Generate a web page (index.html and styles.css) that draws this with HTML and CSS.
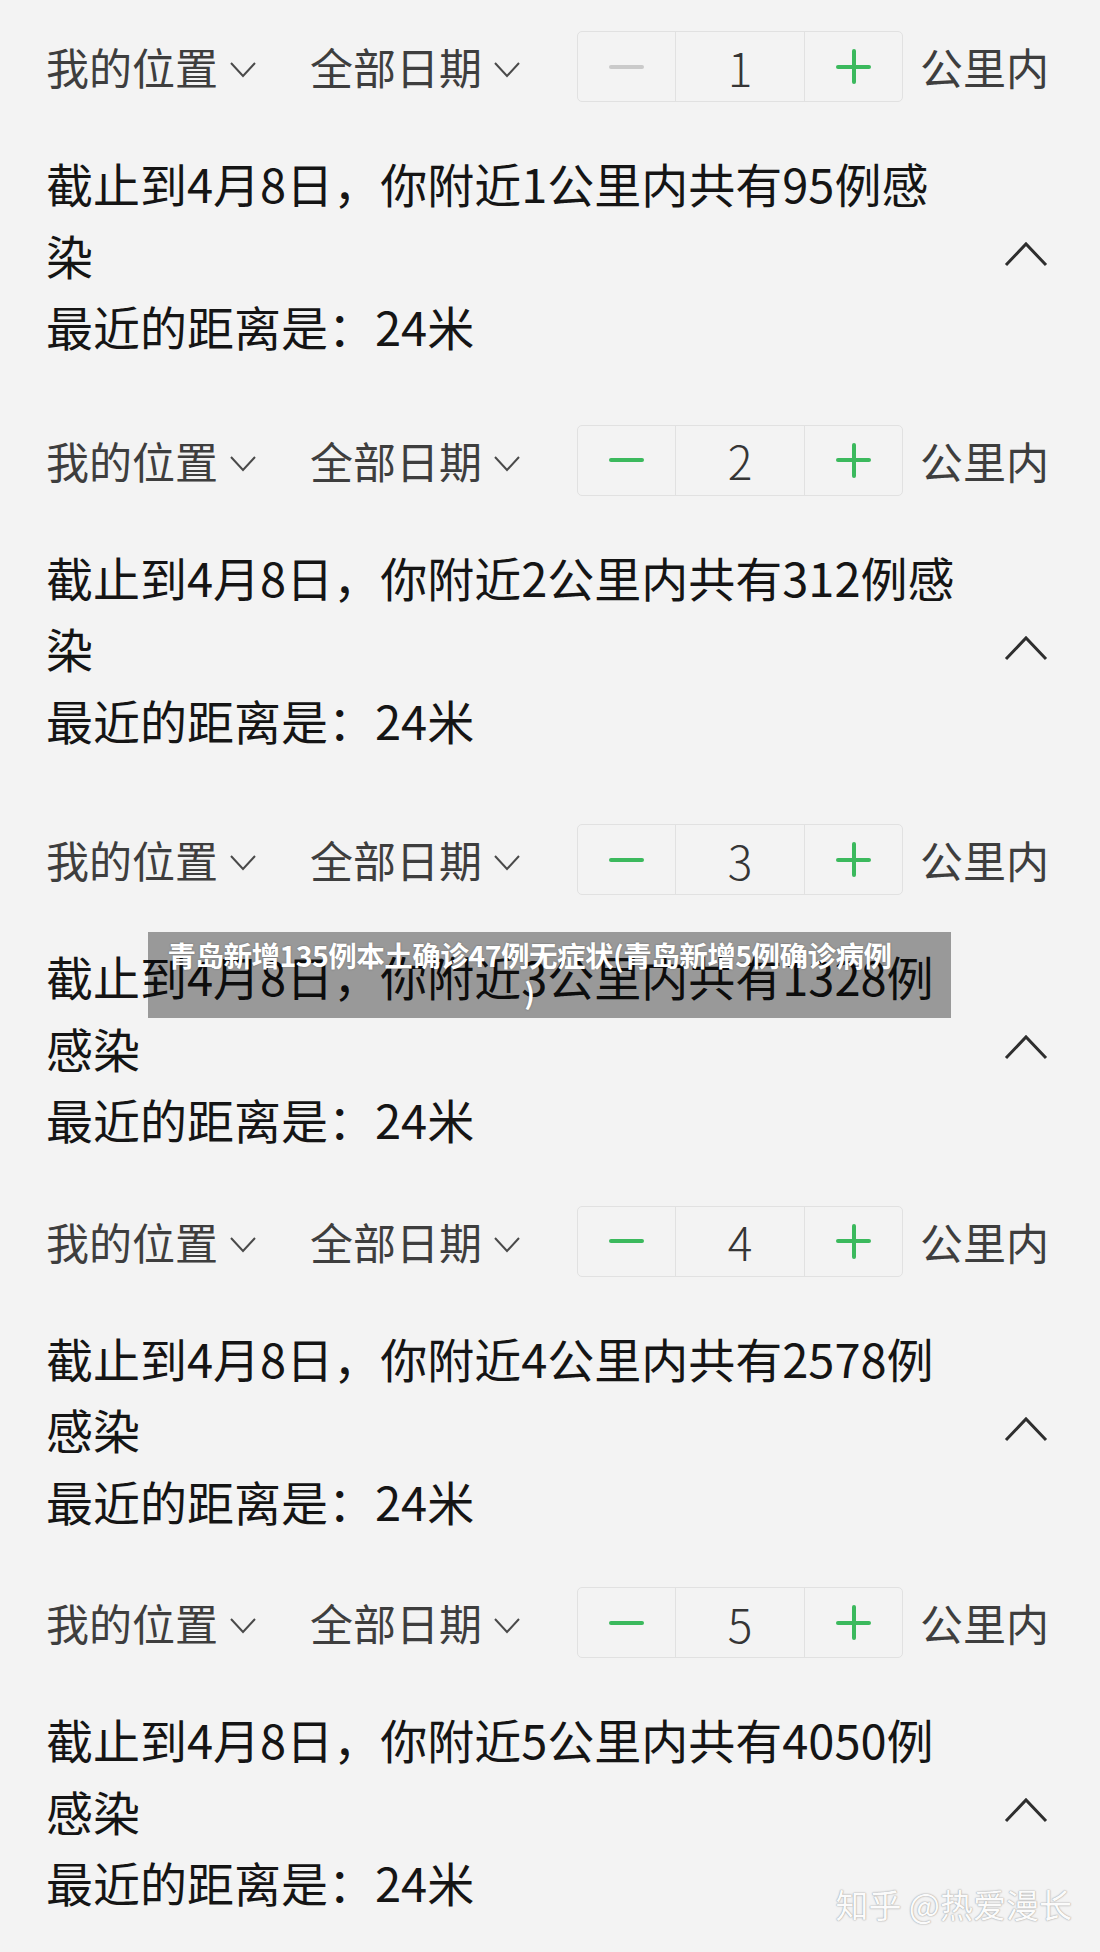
FILE: index.html
```html
<!DOCTYPE html>
<html lang="zh-CN">
<head>
<meta charset="utf-8">
<title>附近感染查询</title>
<link rel="stylesheet" href="styles.css">
</head>
<body>
<div class="page">

  <section class="block block-a">
    <div class="filters">
      <span class="select">我的位置<svg class="caret" viewBox="0 0 28 17"><polyline points="2,2 14,15 26,2"/></svg></span>
      <span class="select">全部日期<svg class="caret" viewBox="0 0 28 17"><polyline points="2,2 14,15 26,2"/></svg></span>
      <div class="stepper">
        <span class="step minus off"><i class="bar-h"></i></span>
        <span class="step value">1</span>
        <span class="step plus"><i class="bar-h"></i><i class="bar-v"></i></span>
      </div>
      <span class="unit">公里内</span>
    </div>
    <div class="result">
      <p class="summary">截止到4月8日，你附近1公里内共有95例感<br>染</p>
      <span class="toggle"><svg viewBox="0 0 46 28"><polyline points="3,25 23,4 43,25"/></svg></span>
    </div>
    <p class="distance">最近的距离是：24米</p>
  </section>

  <section class="block block-b">
    <div class="filters">
      <span class="select">我的位置<svg class="caret" viewBox="0 0 28 17"><polyline points="2,2 14,15 26,2"/></svg></span>
      <span class="select">全部日期<svg class="caret" viewBox="0 0 28 17"><polyline points="2,2 14,15 26,2"/></svg></span>
      <div class="stepper">
        <span class="step minus"><i class="bar-h"></i></span>
        <span class="step value">2</span>
        <span class="step plus"><i class="bar-h"></i><i class="bar-v"></i></span>
      </div>
      <span class="unit">公里内</span>
    </div>
    <div class="result">
      <p class="summary">截止到4月8日，你附近2公里内共有312例感<br>染</p>
      <span class="toggle"><svg viewBox="0 0 46 28"><polyline points="3,25 23,4 43,25"/></svg></span>
    </div>
    <p class="distance">最近的距离是：24米</p>
  </section>

  <section class="block">
    <div class="filters">
      <span class="select">我的位置<svg class="caret" viewBox="0 0 28 17"><polyline points="2,2 14,15 26,2"/></svg></span>
      <span class="select">全部日期<svg class="caret" viewBox="0 0 28 17"><polyline points="2,2 14,15 26,2"/></svg></span>
      <div class="stepper">
        <span class="step minus"><i class="bar-h"></i></span>
        <span class="step value">3</span>
        <span class="step plus"><i class="bar-h"></i><i class="bar-v"></i></span>
      </div>
      <span class="unit">公里内</span>
    </div>
    <div class="result">
      <p class="summary">截止到4月8日，你附近3公里内共有1328例<br>感染</p>
      <span class="toggle"><svg viewBox="0 0 46 28"><polyline points="3,25 23,4 43,25"/></svg></span>
    </div>
    <p class="distance">最近的距离是：24米</p>
  </section>

  <section class="block">
    <div class="filters">
      <span class="select">我的位置<svg class="caret" viewBox="0 0 28 17"><polyline points="2,2 14,15 26,2"/></svg></span>
      <span class="select">全部日期<svg class="caret" viewBox="0 0 28 17"><polyline points="2,2 14,15 26,2"/></svg></span>
      <div class="stepper">
        <span class="step minus"><i class="bar-h"></i></span>
        <span class="step value">4</span>
        <span class="step plus"><i class="bar-h"></i><i class="bar-v"></i></span>
      </div>
      <span class="unit">公里内</span>
    </div>
    <div class="result">
      <p class="summary">截止到4月8日，你附近4公里内共有2578例<br>感染</p>
      <span class="toggle"><svg viewBox="0 0 46 28"><polyline points="3,25 23,4 43,25"/></svg></span>
    </div>
    <p class="distance">最近的距离是：24米</p>
  </section>

  <section class="block">
    <div class="filters">
      <span class="select">我的位置<svg class="caret" viewBox="0 0 28 17"><polyline points="2,2 14,15 26,2"/></svg></span>
      <span class="select">全部日期<svg class="caret" viewBox="0 0 28 17"><polyline points="2,2 14,15 26,2"/></svg></span>
      <div class="stepper">
        <span class="step minus"><i class="bar-h"></i></span>
        <span class="step value">5</span>
        <span class="step plus"><i class="bar-h"></i><i class="bar-v"></i></span>
      </div>
      <span class="unit">公里内</span>
    </div>
    <div class="result">
      <p class="summary">截止到4月8日，你附近5公里内共有4050例<br>感染</p>
      <span class="toggle"><svg viewBox="0 0 46 28"><polyline points="3,25 23,4 43,25"/></svg></span>
    </div>
    <p class="distance">最近的距离是：24米</p>
  </section>

  <div class="banner">青岛新增135例本土确诊47例无症状(青岛新增5例确诊病例<br>)</div>
  <div class="watermark">知乎 @热爱漫长</div>
</div>
</body>
</html>
```

FILE: styles.css
```css
html, body {
  margin: 0;
  padding: 0;
  background: #f3f3f3;
}

body {
  font-family: "Noto Sans CJK SC", "Noto Sans", sans-serif;
  color: #151515;
}

.page {
  position: relative;
  box-sizing: border-box;
  width: 1100px;
  height: 1952px;
  padding: 31px 51px 0 46px;
  overflow: hidden;
}

.block {
  margin-bottom: 51px;
}

.block-a {
  margin-bottom: 63px;
}

.block-b {
  margin-bottom: 69px;
}

/* filter row */
.filters {
  display: flex;
  align-items: center;
  height: 71px;
  font-size: 43px;
  color: #3e3e3e;
}

.select {
  display: flex;
  align-items: center;
  white-space: nowrap;
  line-height: 71px;
}

.select + .select {
  margin-left: 53px;
}

.caret {
  width: 28px;
  height: 17px;
  margin-left: 11px;
  margin-top: 6px;
  fill: none;
  stroke: #4a4a4a;
  stroke-width: 2;
}

.stepper {
  display: flex;
  margin-left: 56px;
  width: 333px;
  height: 71px;
  box-sizing: border-box;
  border: 1.5px solid #e1e1e1;
  border-radius: 5px;
}

.step {
  position: relative;
  display: flex;
  align-items: center;
  justify-content: center;
}

.minus,
.plus {
  width: 97px;
}

.value {
  flex: 1;
  border-left: 1.5px solid #e1e1e1;
  border-right: 1.5px solid #e1e1e1;
  font-size: 46px;
  font-weight: 300;
  color: #353535;
  line-height: 1;
}

.bar-h,
.bar-v {
  position: absolute;
  left: 50%;
  top: 50%;
  background: #3bb95d;
  border-radius: 2px;
}

.bar-h {
  width: 35px;
  height: 4px;
  margin: -2px 0 0 -17.5px;
}

.bar-v {
  width: 4px;
  height: 35px;
  margin: -17.5px 0 0 -2px;
}

.off .bar-h {
  background: #cacaca;
}

.unit {
  margin-left: 17px;
  white-space: nowrap;
  line-height: 71px;
}

/* result text */
.result {
  display: flex;
  align-items: flex-end;
  justify-content: space-between;
  margin-top: 45px;
}

.summary,
.distance {
  margin: 0;
  font-size: 47px;
  line-height: 71.5px;
  white-space: nowrap;
}

.toggle {
  display: flex;
  align-items: center;
  height: 71.5px;
  margin-top: 3px;
}

.toggle svg {
  width: 46px;
  height: 28px;
  fill: none;
  stroke: #2e2e2e;
  stroke-width: 3;
}

/* overlay title */
.banner {
  position: absolute;
  left: 148px;
  top: 932px;
  width: 803px;
  height: 86px;
  box-sizing: border-box;
  padding: 4px 40px 0 0;
  background: rgba(0, 0, 0, 0.37);
  color: #fff;
  font-size: 28.5px;
  font-weight: 700;
  line-height: 37px;
  text-align: center;
  letter-spacing: -0.5px;
  text-shadow: 0 0 2px rgba(0, 0, 0, 0.35);
}

.watermark {
  position: absolute;
  right: 28px;
  bottom: 28px;
  font-size: 33px;
  line-height: 40px;
  color: #fbfbfb;
  text-shadow: 0 0 1px #9a9a9a, 0 0 2px #b0b0b0;
  white-space: nowrap;
}
```
